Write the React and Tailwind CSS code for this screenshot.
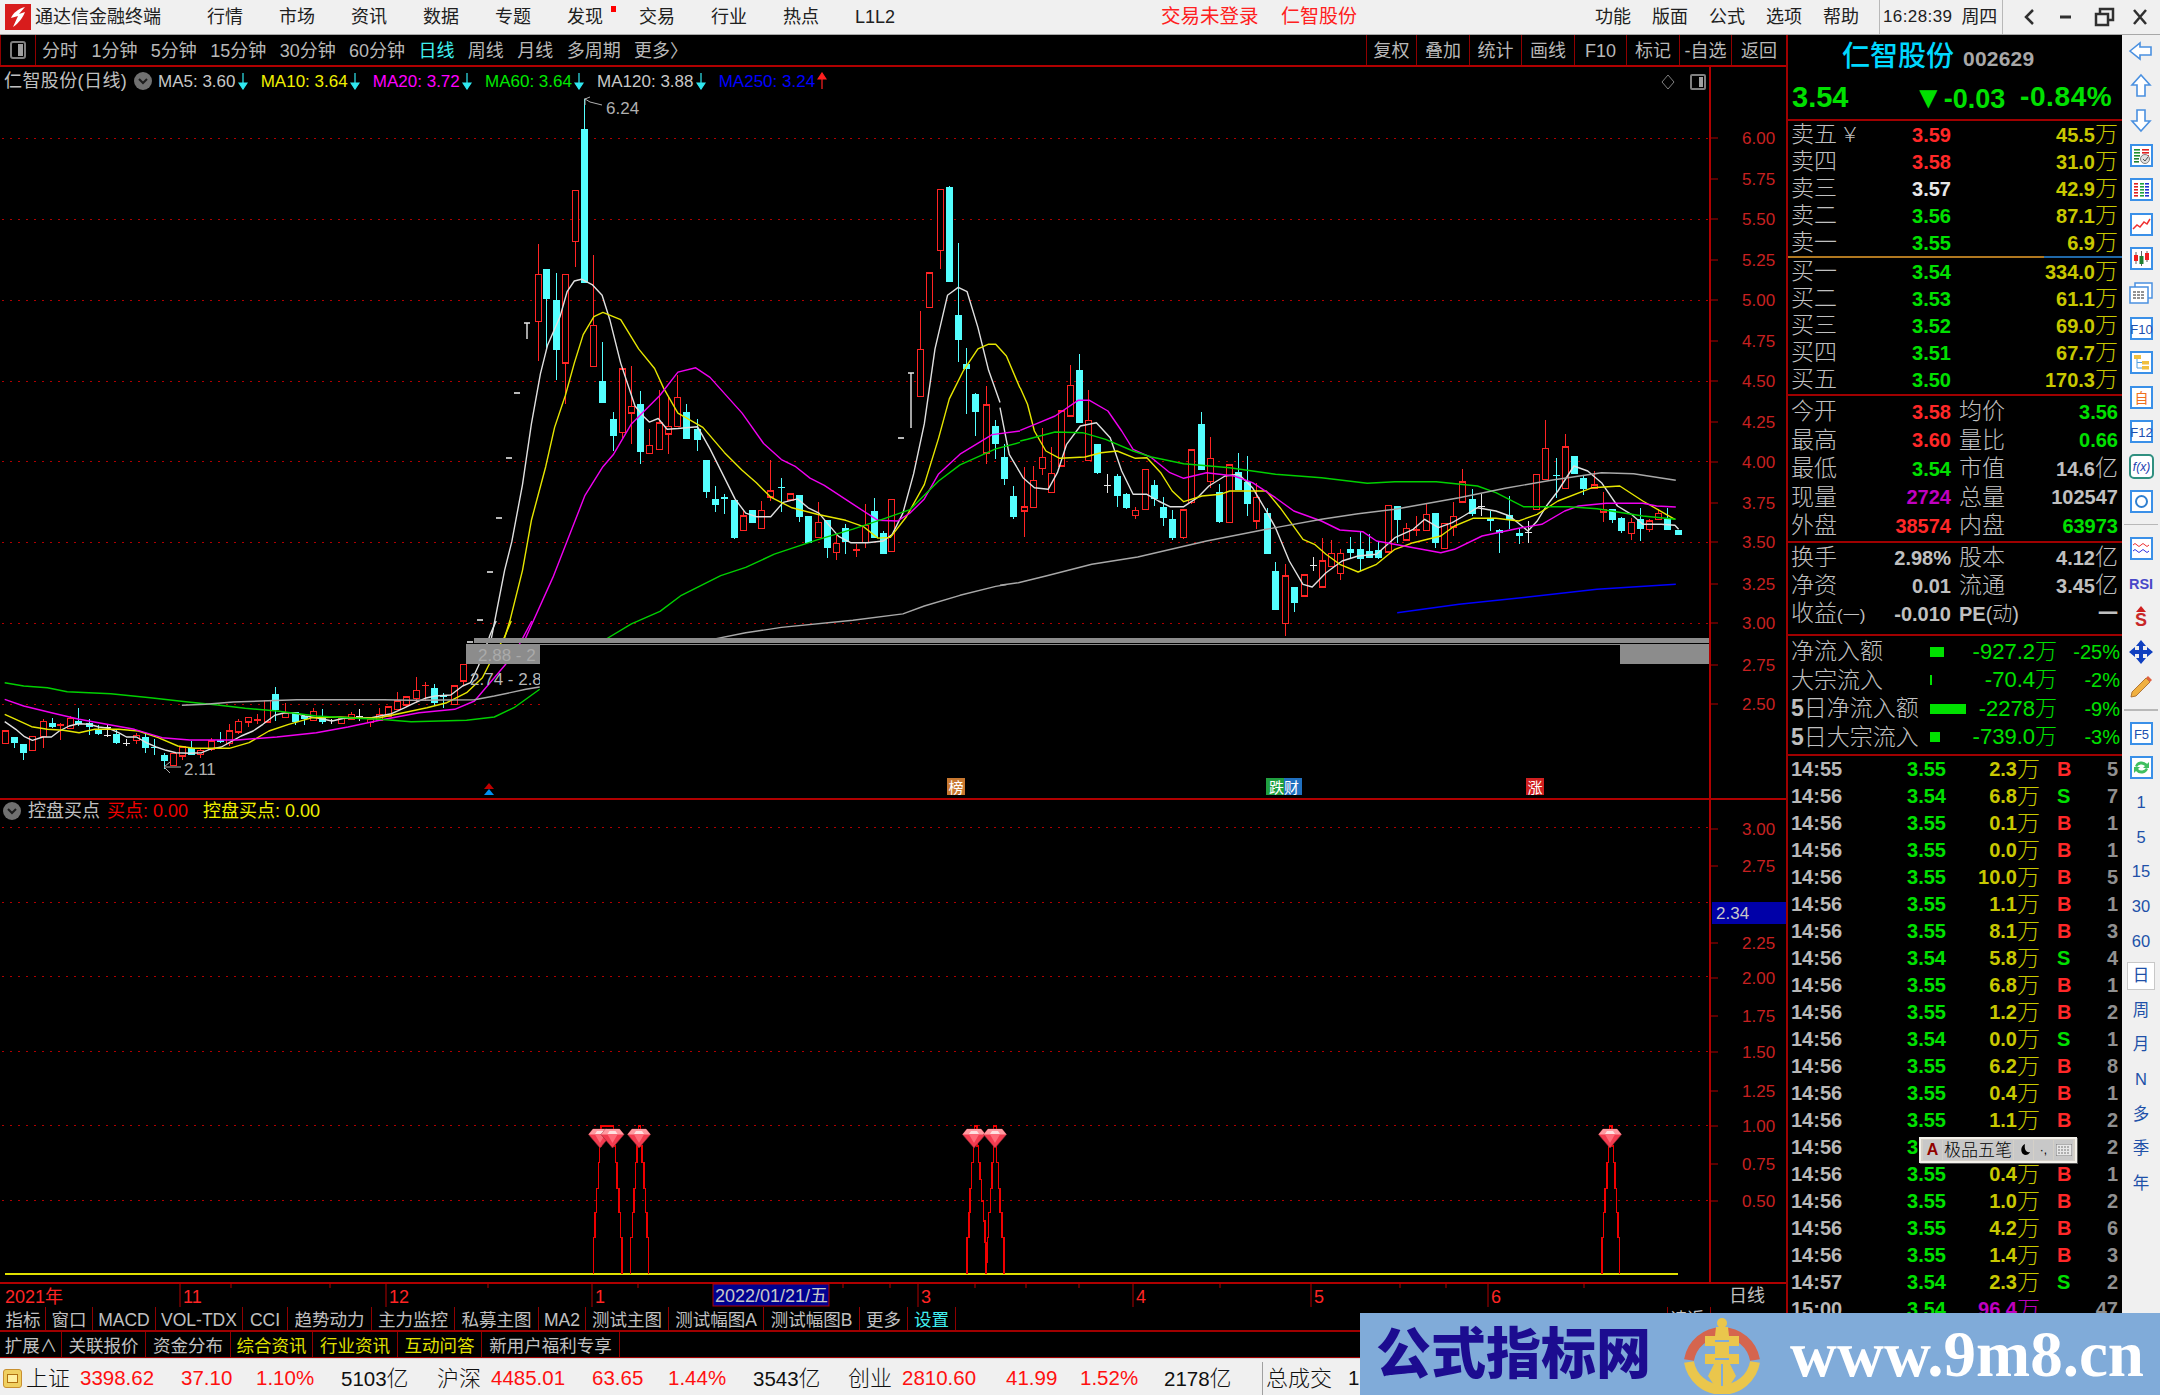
import React from "react";

const z7 = ([x, y]) => [x / 2.529, 620 + y / 3];
const z8 = ([x, y]) => [460 + x / 2.8, 80 + y / 2.8];
const z9 = ([x, y]) => [1000 + x / 2.178, 340 + y / 3];
const zs = ([x, y]) => [560 + x / 2.8, 1100 + y / 3];

// x, bodyTop, bodyBottom, wickTop, wickBottom, type
const c7 = [
  [13,330,367,330,367,"r"],[36,347,367,347,382,"c"],[59,368,395,368,417,"c"],[82,347,388,347,388,"r"],[108,302,347,293,380,"r"],[131,305,318,290,322,"c"],[153,312,314,305,358,"r"],[177,293,322,285,322,"r"],[198,300,310,262,315,"c"],[225,305,318,293,342,"c"],[248,325,340,312,342,"c"],[270,320,322,310,348,"w"],[270,343,345,310,348,"w"],[293,340,365,325,368,"c"],[318,367,369,355,375,"w"],[343,343,358,335,368,"r"],[366,347,382,340,395,"c"],[389,380,385,355,403,"c"],[415,403,420,395,445,"c"],[438,398,433,398,433,"r"],[461,378,405,378,417,"r"],[484,380,403,360,403,"c"],[507,388,400,385,412,"r"],[533,360,385,350,390,"r"],[556,360,362,333,367,"c"],[579,330,367,310,375,"r"],[601,302,333,295,340,"r"],[628,290,303,288,317,"r"],[650,297,299,280,310,"r"],[674,238,303,238,303,"r"],[696,220,268,197,300,"c"],[722,278,290,247,290,"r"],[745,272,302,272,313,"c"],[768,285,295,280,313,"c"],[791,272,298,262,300,"r"],[814,285,303,265,308,"c"],[838,299,301,295,310,"w"],[863,293,308,293,308,"r"],[887,280,295,273,295,"r"],[908,287,289,265,300,"w"],[935,295,305,290,317,"r"],[958,280,297,262,300,"r"],[980,258,285,258,285,"r"],[1003,240,265,212,265,"r"],[1026,228,252,228,258,"r"],[1052,208,233,167,245,"r"],[1075,194,196,183,240,"r"],[1098,202,247,188,255,"c"],[1121,227,229,215,262,"c"],[1147,195,250,195,253,"r"],[1171,130,180,130,195,"r"],
];
const c8 = [
  [217,541,673,457,783,"r"],[242,525,611,525,750,"c"],[268,613,753,537,837,"c"],[293,541,790,541,905,"r"],[322,307,450,307,520,"r"],[347,133,565,50,565,"c"],[373,685,800,487,800,"r"],[398,840,902,730,902,"c"],[428,945,993,928,1035,"c"],[453,806,985,806,1000,"r"],[478,912,930,797,1015,"r"],[503,903,1040,868,1073,"c"],[528,1021,1043,975,1043,"r"],[558,958,1031,865,1031,"r"],[583,968,988,885,1043,"r"],[608,887,968,823,968,"r"],[633,928,1003,905,1003,"c"],[663,975,1005,945,1035,"c"],[688,1062,1150,1062,1167,"c"],[713,1170,1187,1133,1208,"c"],[738,1168,1170,1155,1212,"c"],[768,1172,1280,1172,1283,"c"],[793,1218,1258,1205,1258,"r"],[818,1200,1238,1200,1238,"c"],[843,1203,1253,1175,1253,"r"],[868,1148,1165,1062,1175,"r"],[898,1138,1143,1112,1208,"c"],[923,1156,1173,1156,1175,"r"],[948,1158,1220,1158,1235,"c"],[973,1217,1293,1217,1293,"c"],[1003,1237,1278,1180,1278,"r"],[1028,1230,1308,1230,1335,"c"],[1053,1295,1320,1270,1342,"r"],[1078,1252,1290,1240,1325,"c"],[1108,1313,1316,1297,1332,"r"],[1133,1245,1293,1185,1308,"r"],[1158,1205,1280,1167,1280,"c"],[1183,1265,1325,1260,1325,"c"],[1208,1172,1317,1172,1317,"r"],[1289,752,884,643,884,"r"],[1314,538,635,538,635,"r"],[1343,303,475,303,527,"r"],[1368,298,562,293,562,"c"],[1393,655,725,453,787,"c"],[1418,793,805,747,933,"c"],[1443,876,927,873,993,"c"],[1473,907,1042,853,1073,"r"],[1498,965,1015,950,1057,"c"],[1523,1053,1115,1017,1132,"c"],[1548,1163,1222,1133,1225,"c"],
];
const c9 = [
  [52,498,510,378,587,"r"],[72,418,500,375,500,"r"],[91,350,382,260,402,"r"],[110,398,455,318,455,"r"],[132,210,375,210,375,"r"],[152,133,225,73,225,"r"],[172,88,245,38,245,"c"],[192,238,358,147,358,"r"],[212,308,395,308,400,"c"],[233,434,436,398,455,"w"],[254,405,465,398,497,"c"],[274,460,500,455,503,"c"],[293,508,523,497,533,"r"],[316,385,505,385,505,"r"],[336,433,473,417,495,"c"],[355,497,532,467,555,"c"],[375,533,592,507,598,"c"],[398,507,590,507,595,"r"],[417,327,485,327,490,"r"],[437,250,388,213,388,"c"],[457,353,422,287,440,"r"],[477,453,542,430,545,"c"],[498,372,545,372,545,"r"],[518,392,447,335,447,"c"],[538,423,490,345,525,"c"],[558,470,540,427,565,"r"],[581,515,640,500,640,"c"],[600,690,807,663,807,"c"],[620,705,847,670,885,"r"],[640,737,785,737,812,"c"],[662,702,765,702,765,"r"],[682,674,676,647,690,"w"],[702,660,738,592,738,"r"],[722,638,677,597,677,"r"],[741,638,697,625,717,"r"],[763,625,637,587,650,"c"],[783,625,653,573,690,"c"],[803,630,650,580,650,"c"],[823,628,652,600,655,"c"],[845,493,633,493,633,"r"],[865,495,537,495,605,"c"],[885,562,597,545,600,"r"],[905,567,569,525,585,"r"],[927,520,568,488,568,"r"],[947,517,605,517,620,"c"],[966,548,622,548,622,"r"],[986,527,558,483,585,"r"],[1006,423,483,385,483,"r"],[1028,475,518,445,525,"c"],[1048,497,499,460,525,"w"],[1067,537,539,510,570,"c"],[1087,567,575,565,637,"c"],[1109,522,537,466,565,"c"],[1130,575,585,560,608,"c"],[1149,574,576,540,607,"w"],[1168,400,505,400,505,"r"],[1188,323,415,237,415,"r"],[1211,404,406,350,470,"c"],[1231,318,442,278,442,"r"],[1250,345,400,345,400,"c"],[1270,412,443,405,463,"c"],[1293,432,443,390,443,"r"],[1313,505,513,453,542,"r"],[1332,505,538,505,545,"c"],[1352,530,570,528,575,"c"],[1374,545,577,530,597,"r"],[1394,535,563,500,600,"c"],[1414,540,565,535,573,"r"],[1434,518,535,505,535,"r"],[1453,535,567,502,567,"c"],[1476,566,581,566,581,"c"],
];

const ma = [
  { color: "#e0e0e0", parts: [
    [z7, [[12,302],[40,325],[62,347],[82,358],[108,348],[130,348],[150,330],[175,315],[198,308],[225,310],[250,318],[275,322],[300,335],[320,348],[345,348],[370,365],[395,378],[420,388],[445,395],[480,397],[510,395],[530,385],[560,378],[590,358],[610,345],[640,330],[665,310],[695,283],[720,275],[745,275],[770,285],[800,290],[840,300],[870,292],[905,292],[940,290],[960,285],[990,278],[1020,262],[1050,245],[1075,232],[1100,225],[1140,222],[1170,195],[1190,185],[1210,135],[1225,90],[1240,40],[1255,0]]],
    [z8, [[88,1560],[125,1370],[145,1290],[175,1130],[200,960],[225,820],[245,740],[280,660],[300,590],[320,560],[340,555],[370,570],[398,600],[420,670],[450,790],[490,910],[515,940],[530,955],[555,945],[580,975],[610,973],[665,968],[700,1030],[740,1110],[770,1170],[800,1210],[830,1220],[870,1220],[905,1180],[945,1170],[975,1195],[1005,1210],[1030,1240],[1060,1275],[1095,1293],[1140,1293],[1185,1288],[1210,1270],[1240,1210],[1270,1100],[1300,960],[1330,750],[1365,600],[1395,578],[1420,590],[1450,690],[1480,810],[1512,900]]],
    [z9, [[0,200],[20,340],[50,410],[75,440],[105,445],[125,395],[145,310],[175,255],[210,245],[240,290],[265,390],[290,460],[320,460],[345,480],[370,497],[400,497],[430,470],[455,435],[490,405],[520,400],[550,440],[580,510],[600,560],[630,660],[660,730],[680,738],[710,695],[745,660],[780,645],[820,640],[860,590],[900,565],[925,535],[955,560],[985,545],[1010,525],[1040,500],[1080,510],[1110,525],[1150,570],[1170,540],[1190,495],[1215,450],[1250,375],[1280,390],[1310,425],[1345,495],[1375,520],[1400,550],[1440,550],[1470,553],[1478,565]]],
  ]},
  { color: "#e6e600", parts: [
    [z7, [[12,280],[40,295],[80,317],[120,325],[160,328],[200,335],[240,325],[300,325],[350,330],[400,350],[450,375],[490,382],[580,382],[630,365],[680,330],[730,310],[790,290],[860,288],[920,292],[960,290],[1020,275],[1080,260],[1130,245],[1180,215],[1220,170],[1250,100],[1275,50],[1293,0]]],
    [z8, [[122,1568],[140,1510],[175,1370],[200,1230],[240,1080],[265,970],[295,880],[320,790],[345,710],[375,660],[400,648],[450,668],[500,750],[545,805],[570,860],[610,930],[680,970],[740,1040],[790,1090],[830,1125],[870,1165],[930,1195],[1000,1213],[1080,1230],[1130,1248],[1170,1280],[1205,1278],[1250,1220],[1300,1130],[1340,1000],[1370,890],[1410,810],[1450,750],[1480,737],[1500,737],[1530,770],[1568,860]]],
    [z9, [[44,140],[60,190],[75,270],[100,330],[130,352],[185,348],[220,335],[255,330],[295,352],[320,350],[350,395],[375,450],[400,482],[440,465],[480,460],[500,450],[580,450],[610,500],[660,595],[685,610],[710,640],[740,670],[780,693],[820,670],[860,625],[900,605],[960,585],[990,555],[1030,532],[1080,532],[1130,540],[1170,520],[1215,480],[1290,440],[1350,435],[1400,480],[1470,535]]],
  ]},
  { color: "#f000f0", parts: [
    [z7, [[12,235],[60,255],[130,275],[200,295],[270,310],[340,325],[410,350],[480,357],[600,357],[700,348],[800,335],[880,318],[960,298],[1060,275],[1150,265],[1200,240],[1250,170],[1300,100],[1345,0]]],
    [z8, [[180,1568],[260,1390],[350,1160],[400,1080],[430,1045],[480,960],[560,880],[610,815],[660,803],[700,830],[790,930],[850,1015],[900,1060],[940,1080],[980,1112],[1020,1132],[1100,1185],[1170,1230],[1225,1232],[1260,1210],[1300,1170],[1340,1100],[1400,1045],[1490,990],[1568,980]]],
    [z9, [[44,268],[80,248],[120,225],[170,178],[195,178],[235,210],[265,270],[290,325],[330,350],[370,395],[400,412],[450,395],[510,405],[550,425],[600,470],[640,510],[700,540],[740,567],[790,572],[820,600],[880,615],[960,635],[990,625],[1050,585],[1130,562],[1180,550],[1230,510],[1260,495],[1320,487],[1400,487],[1430,495],[1472,498]]],
  ]},
  { color: "#00d000", parts: [
    [z7, [[12,185],[60,195],[120,200],[170,212],[280,218],[380,230],[470,242],[550,252],[620,262],[700,270],[800,285],[900,292],[960,295],[1040,302],[1180,298],[1250,288],[1300,260],[1365,205]]],
    [z8, [[400,1568],[480,1520],[560,1485],[620,1440],[730,1385],[800,1362],[880,1325],[1000,1285],[1100,1255],[1180,1228],[1260,1200],[1340,1120],[1400,1075],[1500,1030],[1568,1012]]],
    [z9, [[44,300],[60,295],[120,273],[180,275],[230,295],[290,330],[330,348],[400,368],[500,380],[600,400],[700,410],[800,427],[860,422],[950,422],[1040,435],[1080,455],[1140,497],[1240,497],[1300,503],[1400,525],[1472,535]]],
  ]},
  { color: "#a8a8a8", parts: [
    [z7, [[460,253],[520,250],[590,243],[660,240],[750,236],[970,236],[1040,238],[1200,236],[1250,225],[1330,205],[1365,198]]],
    [z8, [[700,1565],[800,1545],[900,1530],[1100,1510],[1240,1492],[1300,1470],[1400,1440],[1500,1415],[1530,1410]]],
    [z9, [[0,733],[40,725],[100,705],[200,670],[300,648],[450,600],[580,565],[700,535],[780,518],[860,505],[1000,470],[1100,442],[1200,418],[1310,395],[1380,398],[1472,418]]],
  ]},
  { color: "#0000ff", parts: [[z9, [[865,815],[1000,790],[1150,768],[1300,745],[1472,730]]]] },
];

const spikes = [
  [[93,518],[93,482],[98,410],[102,335],[107,262],[110,185],[115,135],[118,75],[150,75],[150,135],[155,185],[160,262],[165,335],[170,410],[173,482],[173,518]],
  [[198,518],[198,482],[203,410],[207,335],[212,262],[216,185],[220,135],[223,75],[226,135],[230,185],[235,262],[239,335],[243,410],[248,482],[248,518]],
  [[1140,518],[1140,482],[1145,410],[1148,335],[1152,262],[1157,185],[1160,135],[1163,75],[1167,135],[1172,185],[1176,235],[1180,300],[1185,360],[1190,425],[1193,485],[1193,518]],
  [[1193,518],[1197,485],[1200,410],[1205,335],[1210,262],[1214,185],[1218,75],[1222,185],[1227,262],[1232,335],[1237,410],[1243,482],[1243,518]],
  [[2917,518],[2917,482],[2922,410],[2926,335],[2931,262],[2935,185],[2939,135],[2942,75],[2945,135],[2949,185],[2954,262],[2958,335],[2962,410],[2967,482],[2967,518]],
];

const pts = (f, list) => list.map((p) => f(p).map((v) => v.toFixed(1)).join(",")).join(" ");
const stair = (list) => list.flatMap((p, i) => (i === 0 ? [p] : p[1] < list[i - 1][1] ? [[list[i - 1][0], p[1]], p] : [[p[0], list[i - 1][1]], p]));

function Candles({ data, f }) {
  return data.map(([x, t, b, wt, wb, k], i) => {
    const [rx] = f([x, 0]);
    const cx = Math.round(rx) + 0.5;
    const top = f([0, t])[1], bot = f([0, b])[1], wtop = f([0, wt])[1], wbot = f([0, wb])[1];
    const color = k === "r" ? "#ff2424" : k === "c" ? "#54ffff" : "#e8e8e8";
    const w = 7;
    const thin = bot - top < 2;
    return (
      <g key={i} shapeRendering="crispEdges">
        <line x1={cx} x2={cx} y1={wtop} y2={wbot} stroke={color} strokeWidth="1" />
        {thin ? (
          <line x1={cx - 3.5} x2={cx + 3.5} y1={top} y2={top} stroke={color} strokeWidth="1.6" />
        ) : k === "r" ? (
          <rect x={cx - 3} y={top} width={w - 1} height={bot - top} fill="#000" stroke={color} strokeWidth="1.4" />
        ) : (
          <rect x={cx - 3.5} y={top} width={w} height={bot - top} fill={color} />
        )}
      </g>
    );
  });
}

const Grid = ({ ys }) => ys.map((y) => (
  <line key={y} x1="2" x2="1709" y1={y + 0.5} y2={y + 0.5} stroke="#b00000" strokeWidth="1" strokeDasharray="2 6" />
));

const AxisLabels = ({ items }) => items.map(([label, y]) => (
  <g key={label}>
    <line x1="1710" x2="1718" y1={y} y2={y} stroke="#b00000" strokeWidth="1" />
    {label && <text x="1742" y={y} dominantBaseline="central" fontSize="17" fill="#c82020">{label}</text>}
  </g>
));

const Gem = ({ x }) => (
  <g transform={`translate(${x},1128)`}>
    <path d="M-7 0 H7 L11.5 5.5 L0 19 L-11.5 5.5 Z" fill="#f23c50" stroke="#8a2a32" strokeWidth="0.6" />
    <path d="M-7 0 H7 L11.5 5.5 H-11.5 Z" fill="#ff9aa0" />
    <path d="M-5 5.5 H5 L0 14 Z" fill="#ff6a78" />
    <path d="M-3 2 H3 L5 5 H-5 Z" fill="#ffe0e0" />
  </g>
);

function Chart() {
  return (
    <svg className="block h-[1240px] w-[1787px]" viewBox="0 66 1787 1240">
      <rect x="0" y="66" width="1787" height="1240" fill="#000" />
      <Grid ys={[137, 218, 299, 380, 460, 541, 622, 703]} />
      <Grid ys={[826, 901, 975, 1050, 1124, 1199]} />

      <Candles data={c7} f={z7} />
      <Candles data={c8} f={z8} />
      <Candles data={c9} f={z9} />
      {/* limit-up dashes */}
      {[[470, 641], [480, 619], [490, 571], [499, 517], [509, 457], [517, 392], [901, 437]].map(([x, y]) => (
        <line key={x} x1={x - 3} x2={x + 3} y1={y} y2={y} stroke="#e8e8e8" strokeWidth="1.6" />
      ))}
      <path d="M524 322 H530 M527 322 V338" stroke="#e8e8e8" strokeWidth="1.4" fill="none" />
      <path d="M908 372 H914 M911 372 V427" stroke="#e8e8e8" strokeWidth="1.4" fill="none" />
      {ma.map((m) => m.parts.map(([f, list], i) => (
        <polyline key={m.color + i} points={pts(f, list)} fill="none" stroke={m.color} strokeWidth="1.4" strokeLinejoin="round" />
      )))}

      {/* chip summary bands */}
      <rect x="540" y="644" width="1169" height="60" fill="#000" />
      <rect x="474" y="637" width="1235" height="5" fill="#8c8c8c" />
      <rect x="466" y="643" width="1243" height="1" fill="#8c8c8c" />
      <rect x="466" y="643" width="74" height="20" fill="#8c8c8c" />
      <rect x="1620" y="644" width="89" height="19" fill="#8c8c8c" />
      <text x="478" y="654" dominantBaseline="central" fontSize="17" fill="#aaaaaa">2.88 - 2</text>
      <svg x="465" y="664" width="75" height="30" viewBox="465 664 75 30">
        <text x="470" y="678" dominantBaseline="central" fontSize="17" fill="#b8b8b8">2.74 - 2.8</text>
      </svg>

      {/* high / low flags */}
      <path d="M585 97 V104 M585 98 L590 101 L602 104 M585 98 L590 96" stroke="#b0b0b0" strokeWidth="1" fill="none" />
      <text x="606" y="107" dominantBaseline="central" fontSize="17" fill="#b0b0b0">6.24</text>
      <path d="M164 766 H181 M164 766 L170 761 M164 766 L170 772" stroke="#b0b0b0" strokeWidth="1" fill="none" />
      <text x="184" y="768" dominantBaseline="central" fontSize="17" fill="#b0b0b0">2.11</text>

      {/* event markers */}
      <path d="M489 782 L494 788 H484 Z" fill="#c00000" />
      <path d="M489 788 L494 794 H484 Z" fill="#0090f0" />
      <rect x="947" y="777" width="18" height="17" fill="#c87830" />
      <text x="956" y="786" textAnchor="middle" dominantBaseline="central" fontSize="15" fill="#fff">榜</text>
      <rect x="1266" y="777" width="18" height="17" fill="#20a040" />
      <rect x="1284" y="777" width="18" height="17" fill="#2070c0" />
      <text x="1284" y="786" textAnchor="middle" dominantBaseline="central" fontSize="15" fill="#fff">跌财</text>
      <rect x="1526" y="777" width="18" height="17" fill="#d02020" />
      <text x="1535" y="786" textAnchor="middle" dominantBaseline="central" fontSize="15" fill="#fff">涨</text>

      {/* lower indicator */}
      <line x1="5" x2="1678" y1="1273" y2="1273" stroke="#e0e000" strokeWidth="2" />
      {spikes.map((s, i) => (
        <polyline key={i} points={pts(zs, stair(s))} fill="none" stroke="#f00000" strokeWidth="1.4" shapeRendering="crispEdges" />
      ))}
      {[600, 612.5, 639, 974, 995, 1610].map((x) => <Gem key={x} x={x} />)}

      {/* structure */}
      <rect x="0" y="797" width="1787" height="2" fill="#b00000" />
      <rect x="1709" y="66" width="2" height="1216" fill="#b00000" />
      <AxisLabels items={[["6.00",137],["5.75",178],["5.50",218],["5.25",259],["5.00",299],["4.75",340],["4.50",380],["4.25",421],["4.00",461],["3.75",502],["3.50",541],["3.25",583],["3.00",622],["2.75",664],["2.50",703]]} />
      <AxisLabels items={[["3.00",828],["2.75",865],["2.25",942],["2.00",977],["1.75",1015],["1.50",1051],["1.25",1090],["1.00",1125],["0.75",1163],["0.50",1200]]} />
      <rect x="1712" y="901" width="74" height="22" fill="#0000a8" />
      <text x="1716" y="912" dominantBaseline="central" fontSize="17" fill="#c8c8c8">2.34</text>

      {/* time axis */}
      <rect x="0" y="1281" width="1787" height="2" fill="#b00000" />
      {[231, 330, 488, 638, 843, 890, 975, 1026, 1079, 1220, 1400, 1446, 1584].map((x) => (
        <line key={x} x1={x} x2={x} y1="1283" y2="1287" stroke="#b00000" strokeWidth="1" />
      ))}
      {[180, 386, 592, 918, 1133, 1311, 1488].map((x) => (
        <line key={x} x1={x} x2={x} y1="1283" y2="1306" stroke="#b00000" strokeWidth="1" />
      ))}
      <text x="5" y="1296" dominantBaseline="central" fontSize="18" fill="#ff2424">2021年</text>
      <text x="183" y="1296" dominantBaseline="central" fontSize="18" fill="#ff2424">11</text>
      <text x="389" y="1296" dominantBaseline="central" fontSize="18" fill="#ff2424">12</text>
      <text x="595" y="1296" dominantBaseline="central" fontSize="18" fill="#ff2424">1</text>
      <text x="921" y="1296" dominantBaseline="central" fontSize="18" fill="#ff2424">3</text>
      <text x="1136" y="1296" dominantBaseline="central" fontSize="18" fill="#ff2424">4</text>
      <text x="1314" y="1296" dominantBaseline="central" fontSize="18" fill="#ff2424">5</text>
      <text x="1491" y="1296" dominantBaseline="central" fontSize="18" fill="#ff2424">6</text>
      <rect x="713" y="1283" width="116" height="22" fill="#000090" stroke="#b00000" />
      <text x="715" y="1294.5" dominantBaseline="central" fontSize="18" fill="#c8c8c8">2022/01/21/五</text>
      <text x="1729" y="1295" dominantBaseline="central" fontSize="18" fill="#c0c0c0">日线</text>
    </svg>
  );
}

const Chevron = () => (
  <span className="flex h-[18px] w-[18px] shrink-0 items-center justify-center rounded-full bg-[#707070]">
    <svg width="12" height="12" viewBox="0 0 12 12"><path d="M2 4 L6 8 L10 4" stroke="#1c1c1c" strokeWidth="2" fill="none" /></svg>
  </span>
);

const Arrow = ({ up }) => (
  <svg width="10" height="18" viewBox="0 0 10 18" className="mx-[2px]">
    {up ? <path d="M5 17 V6 M1 7 L5 1 L9 7 Z" stroke="#ff2020" fill="#ff2020" strokeWidth="1.2" />
        : <path d="M5 1 V12 M1 11 L5 17 L9 11 Z" stroke="#30e8f0" fill="#30e8f0" strokeWidth="1.2" />}
  </svg>
);

const legend = [
  ["MA5: 3.60", "text-[#c8c8c8]"], ["MA10: 3.64", "text-[#f0f000]"], ["MA20: 3.72", "text-[#ff00ff]"],
  ["MA60: 3.64", "text-[#00e800]"], ["MA120: 3.88", "text-[#c8c8c8]"], ["MA250: 3.24", "text-[#0000ff]", true],
];

function Legend() {
  return (
    <div className="absolute left-[4px] top-[5px] flex h-[18px] items-center text-[17px] leading-none">
      <span className="w-[130px] whitespace-nowrap text-[18px] tracking-[0.4px] text-[#c0c0c0]">仁智股份(日线)</span>
      <Chevron />
      <div className="ml-[6px] flex items-center">
        {legend.map(([t, c, up]) => (
          <span key={t} className="mr-[11.2px] flex items-center">
            <span className={`whitespace-nowrap ${c}`}>{t}</span>
            <Arrow up={up} />
          </span>
        ))}
      </div>
    </div>
  );
}

const menuItems = ["行情", "市场", "资讯", "数据", "专题", "发现", "交易", "行业", "热点", "L1L2"];

function TitleBar() {
  return (
    <div className="flex h-[35px] items-center border-b border-[#a8a8a8] bg-[#f0f0f0] text-[18px] text-[#202020]">
      <svg width="26" height="26" viewBox="0 0 26 26" className="ml-[5px] shrink-0">
        <rect width="26" height="26" fill="#d81c1c" />
        <path d="M20 3 C13 5 8 9 6 14 L13 12 L8 23 C14 19 18 13 20 8 L14 10 Z" fill="#fff" />
      </svg>
      <span className="ml-[4px] w-[172px] shrink-0 whitespace-nowrap">通达信金融终端</span>
      <div className="flex w-[954px] shrink-0">
        {menuItems.map((m) => (
          <span key={m} className="relative mr-[36px] whitespace-nowrap">
            {m}
            {m === "发现" && <span className="absolute left-[44px] top-[2px] h-[6px] w-[5px] bg-[#ff0000]" />}
          </span>
        ))}
      </div>
      <span className="w-[120px] shrink-0 whitespace-nowrap text-[19.5px] text-[#ff2020]">交易未登录</span>
      <span className="w-[314px] shrink-0 whitespace-nowrap text-[19px] text-[#ff2020]">仁智股份</span>
      <div className="flex w-[284px] shrink-0 gap-[21px] whitespace-nowrap">
        {["功能", "版面", "公式", "选项", "帮助"].map((m) => <span key={m}>{m}</span>)}
      </div>
      <div className="flex h-full w-[124px] shrink-0 items-center whitespace-nowrap border-x border-[#b8b8b8] pl-[3px] text-[17px]">
        <span className="tracking-[0.4px]">16:28:39</span>
        <span className="ml-[9px] text-[18px]">周四</span>
      </div>
      <svg width="157" height="24" viewBox="0 0 157 24" className="shrink-0">
        <path d="M30 5 L23 12 L30 19" stroke="#303030" strokeWidth="2.5" fill="none" />
        <path d="M57 12 H68" stroke="#303030" strokeWidth="3" />
        <path d="M93 9 H105 V20 H93 Z M97 9 V4 H110 V15 H105" stroke="#303030" strokeWidth="2.5" fill="none" />
        <path d="M131 5 L143 19 M143 5 L131 19" stroke="#303030" strokeWidth="2.5" />
      </svg>
    </div>
  );
}

const tfItems = [["分时"], ["1分钟"], ["5分钟"], ["15分钟"], ["30分钟"], ["60分钟"], ["日线", true], ["周线"], ["月线"], ["多周期"], ["更多〉"]];
const toolRight = [["复权", 50], ["叠加", 53], ["统计", 52], ["画线", 53], ["F10", 52], ["标记", 53], ["-自选", 52], ["返回", 55]];

function Toolbar() {
  return (
    <div className="flex h-[32px] items-center border-b-2 border-[#b00000] bg-black text-[18px] text-[#b8b8b8]">
      <div className="flex h-full w-[36px] items-center justify-center border-x border-[#900000]">
        <span className="flex h-[18px] w-[16px] items-center justify-end rounded-[3px] border-2 border-[#808080] pr-[1px]">
          <span className="h-[12px] w-[5px] bg-[#a0a0a0]" />
        </span>
      </div>
      <div className="ml-[6px] mt-[3px] flex gap-[13.4px] whitespace-nowrap">
        {tfItems.map(([t, on]) => <span key={t} className={on ? "text-[#40f0f0]" : ""}>{t}</span>)}
      </div>
      <div className="ml-auto flex h-full">
        {toolRight.map(([t, w]) => (
          <span key={t} className={`flex h-full items-center justify-center border-l border-[#900000] pt-[3px] ${w === 50 ? "w-[50px]" : w === 53 ? "w-[53px]" : w === 52 ? "w-[52px]" : "w-[55px]"}`}>{t}</span>
        ))}
      </div>
    </div>
  );
}

const row1 = [["指标",45],["窗口",47],["MACD",63],["VOL-TDX",87],["CCI",45],["趋势动力",84],["主力监控",83],["私募主图",84],["MA2",47],["测试主图",83],["测试幅图A",95],["测试幅图B",96],["更多",48],["设置",48,"text-[#40f0f0]"]];
const row2 = [["扩展∧",61],["关联报价",84],["资金分布",85],["综合资讯",82,"text-[#e0e000]"],["行业资讯",85,"text-[#e0e000]"],["互动问答",84,"text-[#e0e000]"],["新用户福利专享",138]];

function Tab({ t, w, c }) {
  return (
    <span style={{ width: w }} className={`flex h-full shrink-0 items-center justify-center whitespace-nowrap border-r border-[#900000] pt-[3px] ${c || "text-[#c0c0c0]"}`}>{t}</span>
  );
}

function Tabs() {
  return (
    <>
      <div className="flex h-[25px] border-b-2 border-[#a00000] bg-black pl-[1px] text-[17.5px]">
        {row1.map(([t, w, c]) => <Tab key={t} t={t} w={w} c={c} />)}
        <span className="ml-[711px] h-full w-[44px] overflow-hidden whitespace-nowrap border-x border-[#900000] pl-[2px] text-[17px] text-[#c0c0c0]">请近</span>
      </div>
      <div className="flex h-[27px] border-b-2 border-[#a00000] bg-black pl-[1px] text-[17.5px]">
        {row2.map(([t, w, c]) => <Tab key={t} t={t} w={w} c={c} />)}
      </div>
    </>
  );
}

const Line = () => <div className="h-[2px] bg-[#a00000]" />;
const Wan = ({ v, c }) => (
  <span className={`flex items-center justify-end ${c}`}>
    <b className="font-bold">{v}</b><span className="text-[23px] font-light leading-none">万</span>
  </span>
);

function Quote({ label, extra, price, pc, vol }) {
  return (
    <div className="flex h-[27px] items-center pl-[3px]">
      <span className="w-[100px] whitespace-pre text-[23px] font-light leading-none text-[#c0c0c0]">{label}{extra && <span className="ml-[3px] text-[20px]">{extra}</span>}</span>
      <span className={`w-[60px] text-right font-bold ${pc}`}>{price}</span>
      <span className="w-[167px]"><Wan v={vol} c="text-[#c8c800]" /></span>
    </div>
  );
}

const R = "text-[#ff2828]", G = "text-[#00e000]", W = "text-[#e8e8e8]", K = "text-[#c0c0c0]", M = "text-[#c000c0]";
const asks = [["卖五", "3.59", R, "45.5", "￥"], ["卖四", "3.58", R, "31.0"], ["卖三", "3.57", W, "42.9"], ["卖二", "3.56", G, "87.1"], ["卖一", "3.55", G, "6.9"]];
const bids = [["买一", "3.54", G, "334.0"], ["买二", "3.53", G, "61.1"], ["买三", "3.52", G, "69.0"], ["买四", "3.51", G, "67.7"], ["买五", "3.50", G, "170.3"]];
const stats = [
  ["今开", "3.58", R, "均价", "3.56", G], ["最高", "3.60", R, "量比", "0.66", G], ["最低", "3.54", G, "市值", "14.6亿", K],
  ["现量", "2724", M, "总量", "102547", K], ["外盘", "38574", R, "内盘", "63973", G],
];
const stats2 = [["换手", "2.98%", K, "股本", "4.12亿", K], ["净资", "0.01", K, "流通", "3.45亿", K], ["收益(一)", "-0.010", K, "PE(动)", "一", K]];
const flows = [["净流入额", 14, "-927.2", "-25%"], ["大宗流入", 1.5, "-70.4", "-2%"], ["5日净流入额", 36, "-2278", "-9%"], ["5日大宗流入", 10, "-739.0", "-3%"]];

const ticks = [
  ["14:55","3.55","2.3","B","5"],["14:56","3.54","6.8","S","7"],["14:56","3.55","0.1","B","1"],["14:56","3.55","0.0","B","1"],["14:56","3.55","10.0","B","5"],
  ["14:56","3.55","1.1","B","1"],["14:56","3.55","8.1","B","3"],["14:56","3.54","5.8","S","4"],["14:56","3.55","6.8","B","1"],["14:56","3.55","1.2","B","2"],
  ["14:56","3.54","0.0","S","1"],["14:56","3.55","6.2","B","8"],["14:56","3.55","0.4","B","1"],["14:56","3.55","1.1","B","2"],["14:56","3.55","0.8","B","2"],
  ["14:56","3.55","0.4","B","1"],["14:56","3.55","1.0","B","2"],["14:56","3.55","4.2","B","6"],["14:56","3.55","1.4","B","3"],["14:57","3.54","2.3","S","2"],
  ["15:00","3.54","96.4","","47"],
];

function StatRow({ r, h }) {
  return (
    <div className={`flex items-center pl-[3px] ${h}`}>
      <span className="w-[100px] whitespace-nowrap text-[23px] font-light leading-none text-[#c0c0c0]">
        {r[0].startsWith("收益") ? <>收益<span className="text-[17px]">(一)</span></> : r[0]}
      </span>
      <span className={`w-[60px] whitespace-nowrap text-right font-bold ${r[2]}`}>
        <span className="float-right">{r[1]}</span>
      </span>
      <span className="ml-[8px] w-[60px] whitespace-nowrap text-[23px] font-light leading-none text-[#c0c0c0]">
        {r[3].startsWith("PE") ? <><b className="text-[20px] font-bold">PE</b><span className="text-[20px]">(动)</span></> : r[3]}
      </span>
      <span className={`w-[99px] text-right font-bold ${r[5]}`}>
        {r[4].endsWith("亿") ? <>{r[4].slice(0, -1)}<span className="text-[23px] font-light leading-none">亿</span></> : r[4]}
      </span>
    </div>
  );
}

function Panel() {
  return (
    <div className="relative h-full w-[336px] shrink-0 overflow-hidden border-l-2 border-[#a00000] bg-black text-[20px] leading-none">
      <div className="flex h-[40px] items-center pl-[54px] pt-[4px]">
        <span className="text-[28px] font-medium text-[#00d8ff]">仁智股份</span>
        <span className="ml-[9px] mt-[3px] text-[21px] font-bold tracking-[0.2px] text-[#a8a8a8]">002629</span>
      </div>
      <div className="flex h-[44px] items-center pl-[4px] font-bold text-[#00e000]">
        <span className="w-[121px] text-[29px]">3.54</span>
        <span className="w-[107px] whitespace-nowrap text-[27px]"><span className="text-[31px]">▼</span>-0.03</span>
        <span className="whitespace-nowrap text-[28px] tracking-[0.6px]">-0.84%</span>
      </div>
      <Line />
      {asks.map((a) => <Quote key={a[0]} label={a[0]} extra={a[4]} price={a[1]} pc={a[2]} vol={a[3]} />)}
      <div className="flex h-[2px]"><span className="w-[256px] bg-[#b07820]" /><span className="flex-1 bg-[#2068a8]" /></div>
      {bids.map((a) => <Quote key={a[0]} label={a[0]} price={a[1]} pc={a[2]} vol={a[3]} />)}
      <div className="mt-[1px]"><Line /></div>
      <div className="mt-[1.5px]">{stats.map((r) => <StatRow key={r[0]} r={r} h="h-[28.5px]" />)}</div>
      <div className="mt-[0.5px]"><Line /></div>
      <div className="mt-[1px]">{stats2.map((r) => <StatRow key={r[0]} r={r} h="h-[28px]" />)}</div>
      <div className="mt-[6px]"><Line /></div>
      <div className="mt-[2px]">
        {flows.map(([l, w, v, p]) => (
          <div key={l} className="flex h-[28.5px] items-center pl-[3px]">
            <span className="w-[139px] whitespace-nowrap text-[23px] font-light leading-none text-[#c0c0c0]">
              {l[0] === "5" ? <><b className="font-bold">5</b>{l.slice(1)}</> : l}
            </span>
            <span className="flex w-[40px] items-center"><span style={{ width: w }} className="h-[10px] bg-[#00e000]" /></span>
            <span className="flex w-[87px] items-center justify-end text-[22px] font-medium text-[#00e000]">{v}<span className="font-light leading-none">万</span></span>
            <span className="w-[63px] text-right text-[20px] font-medium text-[#00e000]">{p}</span>
          </div>
        ))}
      </div>
      <div className="mt-[2px]"><Line /></div>
      {ticks.map((t, i) => (
        <div key={i} className="flex h-[27px] items-center pl-[3px] font-bold">
          <span className="w-[80px] text-[#b8b8b8]">{t[0]}</span>
          <span className="w-[75px] text-right text-[#00e000]">{t[1]}</span>
          <span className="w-[94px]"><Wan v={t[2]} c={t[0] === "15:00" ? "text-[#c000c0]" : "text-[#c8c800]"} /></span>
          <span className="w-[17px]" />
          <span className={`w-[15px] ${t[3] === "B" ? "text-[#ff2828]" : "text-[#00e000]"}`}>{t[3]}</span>
          <span className="w-[46px] text-right text-[#909090]">{t[4]}</span>
        </div>
      ))}
      {/* IME status bar floating over the ticks */}
      <div className="absolute left-[131px] top-[1102px] flex h-[26px] w-[158px] items-center gap-[1px] border-2 border-[#f4f2ea] bg-[#d4d0c8] pl-[2px] shadow-[1px_1px_0_#555]">
        <span className="flex h-[20px] w-[19px] items-center justify-center bg-[#c8c8c8] text-[16px] font-bold text-[#900000]">A</span>
        <span className="flex h-[20px] w-[70px] items-center justify-center whitespace-nowrap bg-[#c8c8c8] text-[17px] font-light text-black">极品五笔</span>
        <span className="flex h-[20px] w-[19px] items-center justify-center bg-[#c8c8c8]">
          <svg width="12" height="14" viewBox="0 0 12 14"><path d="M7 1 C2 3 2 11 7 12 C10 12 11 11 12 9 C8 10 6 6 7 1 Z" fill="#000" /></svg>
        </span>
        <span className="flex h-[20px] w-[19px] items-center justify-center bg-[#c8c8c8] text-[12px] text-black">·,</span>
        <span className="flex h-[20px] w-[19px] items-center justify-center bg-[#c8c8c8]">
          <svg width="16" height="12" viewBox="0 0 16 12"><rect width="16" height="12" fill="#e8e8e8" stroke="#777" /><path d="M2 3 H14 M2 6 H14 M2 9 H14" stroke="#777" strokeDasharray="2 1" /></svg>
        </span>
      </div>
    </div>
  );
}

/* side toolbar icons */
const BX = ({ children }) => (
  <svg width="23" height="23" viewBox="0 0 23 23">
    <rect x="1" y="1" width="21" height="21" fill="#fff" stroke="#3a90e8" strokeWidth="2" />
    {children}
  </svg>
);
const Plain = ({ children }) => <svg width="26" height="26" viewBox="0 0 26 26">{children}</svg>;
const TextIcon = ({ t }) => (
  <BX><text x="11.5" y="12" textAnchor="middle" dominantBaseline="central" fontSize="13" fill="#2050b0">{t}</text></BX>
);
const bars = (rows, cols) => rows.flatMap((y, ri) => cols.map(([x, w, c], ci) => <rect key={`${ri}-${ci}`} x={x} y={y} width={w} height="1.6" fill={c} />));

const icons = [
  <Plain><path d="M2 13 L12 5 V9 H23 V17 H12 V21 Z" fill="#fff" stroke="#4a90e0" strokeWidth="1.6" /></Plain>,
  <Plain><path d="M13 2 L22 12 H17 V23 H9 V12 H4 Z" fill="#fff" stroke="#4a90e0" strokeWidth="1.6" /></Plain>,
  <Plain><path d="M13 24 L22 14 H17 V3 H9 V14 H4 Z" fill="#fff" stroke="#4a90e0" strokeWidth="1.6" /></Plain>,
  <BX>{bars([5, 8, 11], [[4, 6, "#209030"], [12, 7, "#e02020"]])}{bars([14, 17], [[4, 5, "#208030"]])}<circle cx="15" cy="15" r="4.5" fill="#e0e0e0" stroke="#808080" /><path d="M13 15 L15 17 L18 13" stroke="#505050" fill="none" /></BX>,
  <BX>{bars([5, 8, 11, 14, 17], [[4, 4, "#e02020"], [10, 4, "#20a040"], [15, 4, "#2030d0"]])}</BX>,
  <BX><path d="M3 16 L7 12 L10 14 L14 9 L17 11 L20 6" stroke="#f03030" strokeWidth="1.5" fill="none" /></BX>,
  <BX><path d="M6 5 V17 M11.5 4 V19 M17 4 V15" stroke="#606060" /><rect x="4" y="8" width="4" height="6" fill="#f02020" /><rect x="9.5" y="9" width="4" height="8" fill="#208030" /><rect x="15" y="6" width="4" height="7" fill="#f02020" /></BX>,
  <Plain><rect x="7" y="3" width="17" height="15" fill="#fff" stroke="#4a90e0" strokeWidth="1.5" /><rect x="2" y="7" width="18" height="16" fill="#fff" stroke="#4a90e0" strokeWidth="1.5" /><path d="M5 12 H17 M5 15 H17 M5 18 H17" stroke="#707070" strokeWidth="1.5" strokeDasharray="3 1" /></Plain>,
  <TextIcon t="F10" />,
  <BX><rect x="4" y="4" width="7" height="4" fill="#f0c040" /><rect x="12" y="10" width="7" height="3.5" fill="#f0c040" /><rect x="12" y="15" width="7" height="3.5" fill="#f0c040" /><path d="M7 8 V17 H12 M7 11.5 H12" stroke="#50a0e0" fill="none" /></BX>,
  <BX><text x="11.5" y="12" textAnchor="middle" dominantBaseline="central" fontSize="14" fill="#f07020">自</text></BX>,
  <TextIcon t="F12" />,
  <svg width="25" height="25" viewBox="0 0 25 25"><rect x="1" y="1" width="23" height="23" rx="4" fill="#fff" stroke="#309080" strokeWidth="2" /><text x="12.5" y="12.5" textAnchor="middle" dominantBaseline="central" fontSize="12" fontStyle="italic" fill="#2040b0">f(x)</text></svg>,
  <BX><circle cx="11.5" cy="11.5" r="5.5" fill="none" stroke="#3080d0" strokeWidth="2" /></BX>,
  "sep",
  <BX><path d="M3 8 q2 -3 4 0 t4 0 t4 0 t4 0" stroke="#f03030" fill="none" /><path d="M3 14 q2 -3 4 0 t4 0 t4 0 t4 0" stroke="#3030e0" fill="none" /></BX>,
  <svg width="30" height="18" viewBox="0 0 30 18"><text x="15" y="9.5" textAnchor="middle" dominantBaseline="central" fontSize="14.5" fontWeight="bold" fill="#4848c8">RSI</text></svg>,
  <Plain><path d="M13 2 L18 8 H8 Z" fill="#d02020" /><text x="13" y="16" textAnchor="middle" dominantBaseline="central" fontSize="18" fontWeight="bold" fill="#c82828">S</text></Plain>,
  <Plain><path d="M13 1 L18 7 H15 V11 H19 V8 L25 13 L19 18 V15 H15 V19 H18 L13 25 L8 19 H11 V15 H7 V18 L1 13 L7 8 V11 H11 V7 H8 Z" fill="#1040c0" /></Plain>,
  <Plain><path d="M4 19 L18 5 L22 9 L8 23 L3 24 Z" fill="#f0b040" stroke="#a06020" strokeWidth="0.8" /><path d="M18 5 L20 3 L24 7 L22 9 Z" fill="#e06040" /></Plain>,
  "sep",
  <TextIcon t="F5" />,
  <BX><path d="M5 10 A7 7 0 0 1 17 8 L19 6 V12 H13 L15 10 A5 5 0 0 0 7 11 Z" fill="#40c060" /><path d="M18 13 A7 7 0 0 1 6 15 L4 17 V11 H10 L8 13 A5 5 0 0 0 16 12 Z" fill="#40c060" /></BX>,
];
const sideText = ["1", "5", "15", "30", "60", "日", "周", "月", "N", "多", "季", "年"];

function SideBar() {
  return (
    <div className="h-full w-[38px] shrink-0 overflow-hidden bg-[#f0f0f0] text-[16.5px] text-[#2050a8]">
      <div className="mt-[-1px] flex flex-col items-center">
        {icons.map((ic, i) =>
          ic === "sep" ? (
            <div key={i} className="flex h-[12.4px] w-full items-center px-[2px]"><span className="h-[1.5px] w-full bg-[#b8b8b8]" /></div>
          ) : (
            <div key={i} className="flex h-[34.6px] items-center justify-center">{ic}</div>
          )
        )}
        {sideText.map((t) => (
          <div key={t} className="flex h-[34.6px] items-center justify-center">
            <span className={`flex h-[28px] w-[28px] items-center justify-center ${t === "日" ? "border border-[#c8c8c8] bg-white" : ""}`}>{t}</span>
          </div>
        ))}
      </div>
    </div>
  );
}

function StatusBar() {
  const Num = ({ w, c, children }) => (
    <span style={{ width: w }} className={`shrink-0 whitespace-nowrap ${c}`}>{children}</span>
  );
  const red = "text-[#ff1010]", blk = "text-[#101010]";
  const lbl = `${blk} text-[22px] font-light`;
  const Yi = ({ v, w }) => <Num w={w} c={blk}>{v}<span className="text-[22px] font-light">亿</span></Num>;
  return (
    <div className="flex h-[37px] items-center border-t border-[#d8d8d8] bg-[#f0f0f0] pt-[3px] text-[20.5px] font-medium leading-none">
      <span className="ml-[3px] flex h-[19px] w-[19px] shrink-0 items-center justify-center rounded-[3px] border border-[#c89030] bg-[#f0d060]">
        <span className="h-[9px] w-[11px] border border-[#b07010] bg-[#fff0a0]" />
      </span>
      <span className="w-[4px] shrink-0" />
      <Num w={54} c={lbl}>上证</Num>
      <Num w={101} c={red}>3398.62</Num>
      <Num w={75} c={red}>37.10</Num>
      <Num w={85} c={red}>1.10%</Num>
      <Yi v="5103" w={96} />
      <Num w={54} c={lbl}>沪深</Num>
      <Num w={101} c={red}>4485.01</Num>
      <Num w={76} c={red}>63.65</Num>
      <Num w={85} c={red}>1.44%</Num>
      <Yi v="3543" w={95} />
      <Num w={54} c={lbl}>创业</Num>
      <Num w={104} c={red}>2810.60</Num>
      <Num w={74} c={red}>41.99</Num>
      <Num w={84} c={red}>1.52%</Num>
      <Yi v="2178" w={98} />
      <span className="h-full w-[4px] shrink-0 border-l border-[#a0a0a0]" />
      <Num w={82} c={lbl}>总成交</Num>
      <Num w={20} c={blk}>1</Num>
    </div>
  );
}

function Watermark() {
  return (
    <div className="absolute left-[1360px] top-[1313px] flex h-[82px] w-[800px] items-center bg-[#80abd9]">
      <span className="ml-[16px] whitespace-nowrap text-[55px] font-black leading-none tracking-[0px] text-[#1c0c90]">公式指标网</span>
      <svg width="80" height="80" viewBox="-40 -40 80 80" className="ml-[31px] shrink-0">
        <path d="M-33 6 A33.5 33.5 0 0 1 33 6" fill="none" stroke="#d5654e" strokeWidth="10" />
        <path d="M-33 8 A33.5 33.5 0 0 0 33 8" fill="none" stroke="#eac64c" strokeWidth="10" />
        <circle cx="0" cy="-31" r="5" fill="#eac64c" />
        <path d="M-6 -27 H6 L7 -18 H17 V-8 H7 V0 H17 V10 H8 L14 22 L6 34 H-6 L-14 22 L-8 10 H-17 V0 H-7 V-8 H-17 V-18 H-7 Z" fill="#eac64c" />
        <path d="M-7 -13 H7 M-7 5 H7 M0 10 V32" stroke="#80abd9" strokeWidth="2" />
      </svg>
      <span className="ml-[28px] whitespace-nowrap text-[65px] font-bold leading-none text-white [font-family:'Liberation_Serif',serif]">www.9m8.cn</span>
    </div>
  );
}

export default function App() {
  return (
    <div className="relative h-[1395px] w-[2160px] overflow-hidden bg-black [font-family:'Liberation_Sans','Noto_Sans_CJK_SC',sans-serif]">
      <TitleBar />
      <div className="flex h-[1323px]">
        <div className="flex h-full w-[1786px] shrink-0 flex-col overflow-hidden bg-black">
          <Toolbar />
          <div className="relative h-[1240px] shrink-0">
            <Chart />
            <Legend />
            <div className="absolute left-[1660px] top-[7px] flex items-center gap-[14px]">
              <svg width="16" height="16" viewBox="0 0 16 16"><path d="M8 1 L14 8 L8 15 L2 8 Z" fill="none" stroke="#808080" /></svg>
              <span className="flex h-[16px] w-[16px] items-center justify-end rounded-[2px] border-2 border-[#808080] pr-[1px]"><span className="h-[10px] w-[4px] bg-[#a0a0a0]" /></span>
            </div>
            <div className="absolute left-[3px] top-[734px] flex h-[20px] items-center text-[18px] leading-none">
              <Chevron />
              <span className="ml-[7px] text-[#c0c0c0]">控盘买点</span>
              <span className="ml-[7px] whitespace-nowrap text-[#f00000]">买点: 0.00</span>
              <span className="ml-[15px] whitespace-nowrap text-[#f0f000]">控盘买点: 0.00</span>
            </div>
          </div>
          <Tabs />
        </div>
        <Panel />
        <SideBar />
      </div>
      <StatusBar />
      <Watermark />
    </div>
  );
}
